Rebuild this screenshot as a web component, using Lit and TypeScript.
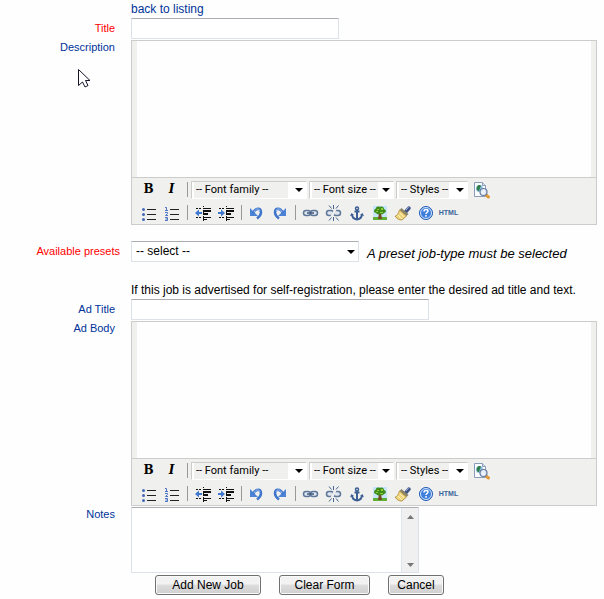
import { LitElement, html, svg, css } from "lit";
import { customElement, property } from "lit/decorators.js";

const undoShape = svg`
  <path d="M5 7v8h8z" fill="#4c83d6"/>
  <path d="M8 12C11 6 16 7 16 11.500C16 14 14 16 12 17.500" fill="none" stroke="#3f76cc" stroke-width="2.500"/>
  <path d="M9 11C11 7 14 7 15 10" fill="none" stroke="#9cc0f2" stroke-width="1"/>`;

const textLines = svg`
  <g fill="none" stroke="#111">
    <path d="M12.500 5v16" stroke-dasharray="1 1"/>
    <path d="M5 7.500h5M5 16.500h5" stroke-dasharray="2 1"/>
    <path d="M12 7.500h8M12 16.500h8"/>
    <path d="M12 10h8M12 13h5" stroke-width="2"/>
    <path d="M12 18.500h4"/>
  </g>`;

const chainLinks = svg`
  <rect x="4.500" y="9.500" width="7" height="5" rx="2.500" fill="#dfe6ef" stroke="#5f7798" stroke-width="1.500"/>
  <rect x="11.500" y="9.500" width="7" height="5" rx="2.500" fill="#dfe6ef" stroke="#5f7798" stroke-width="1.500"/>`;

const icons: Record<string, unknown> = {
  "Bulleted list": svg`
    <g fill="#4468b8"><circle cx="6.500" cy="8.500" r="1.500"/><circle cx="6.500" cy="13.500" r="1.500"/><circle cx="6.500" cy="18.500" r="1.500"/></g>
    <path d="M10 8.500h9M10 13.500h9M10 18.500h9" stroke="#222"/>`,
  "Numbered list": svg`
    <path d="M5 6.500h1.500v3M5 9.500h3M5 11.500h2.500v1L5.500 14.500H8M5 16.500h2.500v3H5M5.500 18h2" fill="none" stroke="#4d74c4"/>
    <path d="M10 8.500h9M10 13.500h9M10 18.500h9" stroke="#222"/>`,
  Outdent: svg`${textLines}<path d="M4 12l4-3.500V11h3v2H8v2.500z" fill="#3f78cf"/>`,
  Indent: svg`${textLines}<path d="M11 12L7 8.500V11H4v2h3v2.500z" fill="#3f78cf"/>`,
  Undo: undoShape,
  Redo: svg`<g transform="matrix(-1 0 0 1 23 0)">${undoShape}</g>`,
  "Insert link": svg`${chainLinks}<path d="M8 12h7" stroke="#40587c" stroke-width="1.500"/>`,
  Unlink: svg`${chainLinks}
    <path d="M13.500 8l-4 8" stroke="#f0f0ee" stroke-width="2.500"/>
    <path d="M11.500 4v4M7 4.500l2.500 3M16.500 4.500L14 7.500M11.500 16v4M7 19.500l2.500-3M16.500 19.500l-2.500-3" stroke="#46658f"/>`,
  Anchor: svg`
    <circle cx="12" cy="7.500" r="1.500" fill="none" stroke="#3d5f94" stroke-width="1.500"/>
    <path d="M12 9v9M9.500 10.500h5" fill="none" stroke="#3d5f94" stroke-width="2"/>
    <path d="M7 13c0 3 2 5 5 5.500c3-.5 5-2.500 5-5.500" fill="none" stroke="#3d5f94" stroke-width="2"/>
    <path d="M5 15l1.500-3L9 14zM19 15l-1.500-3-2.500 2z" fill="#3d5f94"/>`,
  "Insert image": svg`
    <rect x="5" y="5" width="14" height="14" fill="#c6e4fb"/>
    <rect x="5" y="16" width="14" height="3" fill="#5fae35"/>
    <path d="M11 12h2l1 6h-4z" fill="#754a20"/>
    <path d="M6 10c0-2 2-2 2-3s2-2 4-1c2-1 4 0 4 2c3 1 2 4 0 4c-1 2-3 1-4 1c-2 1-3 0-4-1c-1 0-2-1-2-2z" fill="#3f8d18"/>
    <path d="M9 8h2v1H9zM13 7h2v2h-2zM8 10h2v1H8zM12 11h3v1h-3z" fill="#8fcf3d"/>`,
  "Clean up": svg`
    <path d="M15 10.500L18 7" stroke="#3e5487" stroke-width="3.500" stroke-linecap="round"/>
    <path d="M15 9l2.500-3" stroke="#a9bbe0" stroke-width="1"/>
    <path d="M10.500 7l7 6-2 2-7-6z" fill="#8a8468"/>
    <path d="M8.500 9l7 6L11 19c-3 0-5-1-7-4c2 0 3-2 4.500-6z" fill="#f0d47c" stroke="#a88639" stroke-width=".8"/>
    <path d="M7 14l4 4M9 12l4 4" stroke="#fff3bd"/>`,
  Help: svg`
    <circle cx="12" cy="12" r="6.500" fill="#3f7fdc" stroke="#245bb2"/>
    <circle cx="12" cy="12" r="5.500" fill="none" stroke="#d2e4fb"/>
    <path d="M10 10.500c0-3 4-2.500 4-.5c0 1.500-2 1.500-2 3M12 14v1.800" fill="none" stroke="#fff" stroke-width="1.500"/>`,
  Preview: svg`
    <path d="M4.500 4.500h8l3 3v11h-11z" fill="#fbfcff" stroke="#8b9cb8"/>
    <path d="M12.500 4.500v3h3" fill="#d5e0f0" stroke="#8b9cb8"/>
    <circle cx="9.500" cy="10.500" r="3.500" fill="#8cc0dd"/>
    <path d="M7 9c1-3 4-2 4-1l-1 2-1 3c-2 0-3-2-2-4z" fill="#2f7d4b"/>
    <path d="M16 17l2.500 2" stroke="#e19a36" stroke-width="3" stroke-linecap="round"/>
    <circle cx="13.500" cy="14" r="3.500" fill="#e6eff8" fill-opacity=".85" stroke="#64799e" stroke-width="1.200"/>`,
};

const arrow = html`<svg class="arrow" width="8" height="4" viewBox="0 0 8 4" aria-hidden="true"><path d="M0 0h8L4 4z" fill="#000"/></svg>`;

const selectBase = css`
  * { box-sizing: border-box; }
  select { appearance: none; display: block; width: 100%; margin: 0; border-radius: 0; color: #000; }
  .pick { position: relative; flex: none; }
  .arrow { position: absolute; right: 4px; top: 0; bottom: 0; margin: auto 0; pointer-events: none; }
`;

@customElement("rich-editor")
export class RichEditor extends LitElement {
  @property() label = "";

  static styles = [selectBase, css`
    :host { display: block; border: 1px solid #ccc; background: #f0f0ee; }
    .text { display: block; width: calc(100% - 10px); height: 136px; margin: 0 5px; padding: 4px; border: 0; resize: none; outline: 0; background: #fefefe; font: 12px/16px "Liberation Sans", Arial, sans-serif; }
    .bars { border-top: 1px solid #ccc; padding: 0 5px; }
    .bar { display: flex; align-items: center; height: 23px; }
    .tool { flex: none; display: grid; place-items: center; width: 23px; height: 23px; margin: 0; padding: 0; border: 0; background: none; color: #000; }
    .letter { font: bold 12px/23px "DejaVu Serif", serif; }
    .slant { font-style: italic; }
    .source { font: bold 7px/23px "Liberation Sans", Arial, sans-serif; color: #3a669c; }
    .sep { flex: none; width: 1px; height: 15px; margin: 0 3px 0 4px; background: #999; }
    .gap { margin-right: 2px; }
    .family { width: 116px; }
    .size { width: 85px; }
    .styles { width: 72px; }
    select { height: 18px; padding: 0 0 0 4px; border: 1px solid #fff; border-top-color: #ccc; border-left-color: #ccc; background: linear-gradient(to right, #fff 2px, #f0f0ee 2px calc(100% - 18px), #fff calc(100% - 18px)); font: 11px/15px Roboto, "Liberation Sans", sans-serif; }
    .size select { background: linear-gradient(to right, #fff 2px, #f0f0ee 2px calc(100% - 15px), #fff calc(100% - 15px)); }
  `];

  private icon(name: string) {
    return html`<button class="tool" type="button" aria-label=${name}><svg width="23" height="23" viewBox="0 0 23 23">${icons[name]}</svg></button>`;
  }

  private pick(kind: string, text: string) {
    return html`<span class="pick gap ${kind}"><select aria-label=${text}><option>-- ${text} --</option></select>${arrow}</span>`;
  }

  render() {
    const sep = html`<span class="sep"></span>`;
    return html`
      <textarea class="text" aria-label=${this.label}></textarea>
      <div class="bars">
        <div class="bar">
          <button class="tool letter" type="button" aria-label="Bold">B</button>
          <button class="tool letter slant" type="button" aria-label="Italic">I</button>
          ${sep}
          ${this.pick("family", "Font family")}${this.pick("size", "Font size")}${this.pick("styles", "Styles")}
          ${this.icon("Preview")}
        </div>
        <div class="bar">
          ${["Bulleted list", "Numbered list"].map((n) => this.icon(n))}${sep}
          ${["Outdent", "Indent"].map((n) => this.icon(n))}${sep}
          ${["Undo", "Redo"].map((n) => this.icon(n))}${sep}
          ${["Insert link", "Unlink", "Anchor", "Insert image", "Clean up", "Help"].map((n) => this.icon(n))}
          <button class="tool source" type="button">HTML</button>
        </div>
      </div>`;
  }
}

@customElement("app-root")
export class AppRoot extends LitElement {
  static styles = [selectBase, css`
    :host { display: block; position: relative; min-height: 100vh; background: #fefefe; color: #000; font: 12px/16px "Liberation Sans", Arial, sans-serif; }
    form { display: flex; flex-direction: column; gap: 1px; padding-right: 7px; }
    .row { display: grid; grid-template-columns: 131px minmax(0, 1fr); }
    .value { grid-column: 2; }
    .back { display: block; padding-top: 1px; line-height: 16px; color: #003399; text-decoration: none; }
    .label { padding: 0 16px 0 0; text-align: right; font-size: 11px; line-height: 14px; color: #003399; }
    .label.mid { line-height: 20px; }
    .label.req { color: #f00; }
    .label.wide { padding-right: 11px; }
    input, .preset select, .notes { border: 1px solid #dde2ea; border-top-color: #abadb3; border-radius: 1px; background: #fff; }
    input { display: block; height: 21px; margin: 0; padding: 0 4px; font: inherit; }
    .title { width: 208px; }
    .adtitle { width: 298px; }
    .presets { margin-top: 15px; }
    .preset { display: flex; align-items: center; gap: 8px; height: 21px; }
    .preset .pick { width: 228px; }
    .preset select { height: 21px; padding: 0 4px; font: 12px/19px "Liberation Sans", Arial, sans-serif; }
    .hint { padding-top: 4px; font-size: 13px; line-height: 18px; white-space: nowrap; }
    .intro { margin-top: 19px; }
    .notes { display: flex; width: 288px; height: 66px; }
    .notes textarea { flex: 1; min-width: 0; margin: 0; padding: 2px 4px; border: 0; outline: 0; resize: none; background: none; font: inherit; overflow: hidden; }
    .scroll { display: flex; flex-direction: column; align-items: center; justify-content: space-between; width: 17px; padding: 7px 0 5px; border-left: 1px solid #dde6ef; background: #f0f0f0; }
    .actions { display: flex; gap: 18px; margin-top: 1px; padding-left: 24px; }
    .action { height: 20px; padding: 0; border: 1px solid #707070; border-radius: 3px; box-shadow: inset 0 0 0 1px #fafafa; background: linear-gradient(#f2f2f2 0 45%, #dddddd 50%, #cfcfcf); color: #000; font: 12px/16px "Liberation Sans", Arial, sans-serif; }
    .add { width: 106px; }
    .clear { width: 91px; }
    .cancel { width: 56px; }
    .pointer { position: absolute; left: 78px; top: 68px; pointer-events: none; }
  `];

  render() {
    return html`
      <form @submit=${(e: Event) => e.preventDefault()}>
        <div class="row"><div class="value"><a class="back" href="#">back to listing</a></div></div>
        <div class="row">
          <label class="label mid req" for="title">Title</label>
          <input class="title" id="title" type="text">
        </div>
        <div class="row">
          <label class="label" for="description">Description</label>
          <rich-editor id="description" label="Description"></rich-editor>
        </div>
        <div class="row presets">
          <label class="label mid req wide" for="preset">Available presets</label>
          <div class="preset">
            <span class="pick"><select id="preset"><option>-- select --</option></select>${arrow}</span>
            <em class="hint">A preset job-type must be selected</em>
          </div>
        </div>
        <div class="row intro"><div class="value">If this job is advertised for self-registration, please enter the desired ad title and text.</div></div>
        <div class="row">
          <label class="label mid" for="adtitle">Ad Title</label>
          <input class="adtitle" id="adtitle" type="text">
        </div>
        <div class="row">
          <label class="label" for="adbody">Ad Body</label>
          <rich-editor id="adbody" label="Ad Body"></rich-editor>
        </div>
        <div class="row">
          <label class="label" for="notes">Notes</label>
          <div class="notes">
            <textarea id="notes"></textarea>
            <div class="scroll" aria-hidden="true">
              <svg width="7" height="4" viewBox="0 0 7 4"><path d="M0 4h7L3.500 0z" fill="#777"/></svg>
              <svg width="7" height="4" viewBox="0 0 7 4"><path d="M0 0h7L3.500 4z" fill="#777"/></svg>
            </div>
          </div>
        </div>
        <div class="row">
          <div class="value actions">
            <button class="action add" type="submit">Add New Job</button>
            <button class="action clear" type="reset">Clear Form</button>
            <button class="action cancel" type="button">Cancel</button>
          </div>
        </div>
      </form>
      <svg class="pointer" width="13" height="20" viewBox="0 0 13 20" aria-hidden="true">
        <path d="M.5 1.500v16l4-3.500 2.500 5 3-1.500-2.500-5h4.500z" fill="#fff" stroke="#15152a"/>
      </svg>`;
  }
}
